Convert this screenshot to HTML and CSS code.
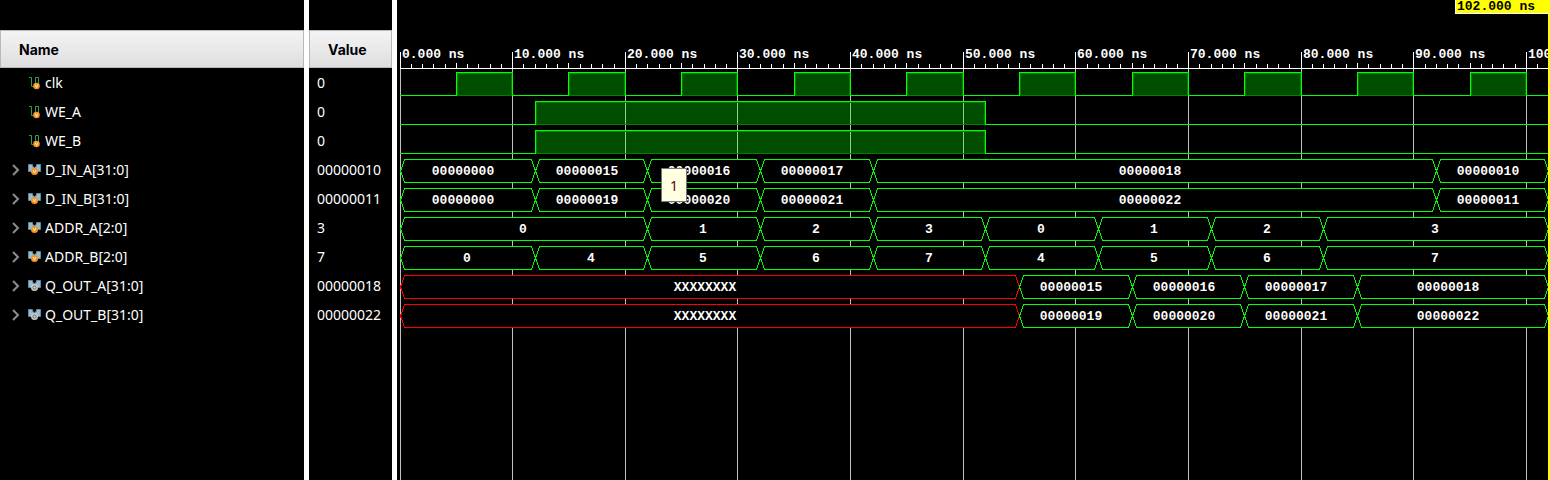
FILE: index.html
```html
<!DOCTYPE html>
<html lang="en">
<head>
<meta charset="utf-8">
<title>Waveform viewer</title>
<link rel="stylesheet" href="styles.css">
</head>
<body>
<svg class="defs" aria-hidden="true">
  <symbol id="bit" viewBox="0 0 14 14">
    <path d="M2 1.500H4.500V10.500H7M8.500 8V1.500H11.500V8" fill="none" stroke="#2f9e44"/>
    <circle cx="9.500" cy="10" r="3.300" fill="#f7941d"/>
    <path d="M8.200 8.500L9.500 11.500L10.800 8.500" fill="none" stroke="#ffe9cc"/>
  </symbol>
  <symbol id="bus-shape" viewBox="0 0 14 14">
    <path d="M1.500 1.500H5.500V3L7.500 5L9.500 3V1.500H13.500V8.500H1.500Z" fill="#93bdd4" stroke="#66889b"/>
  </symbol>
  <symbol id="bus-in" viewBox="0 0 14 14">
    <use href="#bus-shape"/>
    <circle cx="7.500" cy="8.500" r="3.500" fill="#f7941d"/>
    <path d="M6.200 7L7.500 10L8.800 7" fill="none" stroke="#ffe9cc"/>
  </symbol>
  <symbol id="bus-out" viewBox="0 0 14 14">
    <use href="#bus-shape"/>
    <circle cx="7.500" cy="8.500" r="3.500" fill="#c8c8c8"/>
    <circle cx="7.500" cy="8.500" r="1.500" fill="#ddd" stroke="#666"/>
  </symbol>
</svg>
<main class="viewer">
  <section class="names">
    <h2 class="head">Name</h2>
    <ul class="list" id="names"></ul>
  </section>
  <section class="values">
    <h2 class="head">Value</h2>
    <ul class="list" id="values"></ul>
  </section>
  <section class="wave" id="wave">
    <svg class="plot" id="plot" role="img" aria-label="Signal waveforms"></svg>
    <div class="cursor"></div>
    <div class="time">102.000 ns</div>
    <div class="tip" role="tooltip">1</div>
  </section>
</main>
<script src="wave.js"></script>
</body>
</html>
```
FILE: styles.css
```css
* { box-sizing: border-box; }
body {
  margin: 0;
  background: #000;
  color: #fff;
  font: 14px/29px "Noto Sans", sans-serif;
}
.defs { position: absolute; width: 0; height: 0; }
.viewer {
  display: grid;
  grid-template-columns: 309px 88px minmax(0, 1fr);
  min-height: 100vh;
}
.names, .values { padding-top: 30px; border-right: 5px solid #fff; }
.head {
  margin: 0;
  height: 38px;
  padding-left: 18px;
  border: 1px solid #b8b8b8;
  background: linear-gradient(#f4f4f4, #dedee0);
  color: #000008;
  font: bold 14px/38px Inter, sans-serif;
}
.list { list-style: none; margin: 0; padding: 0; }
.row { display: flex; align-items: center; height: 29px; padding-left: 11px; }
.values .row { padding-left: 8px; }
.toggle {
  display: flex;
  width: 10px;
  padding: 0;
  border: 0;
  background: none;
}
.slot { width: 16px; }
.chevron { width: 10px; height: 12px; fill: none; stroke: #8c8c8c; stroke-width: 2; }
.icon { width: 14px; height: 14px; margin-right: 4px; }
.wave { position: relative; overflow: hidden; }
.plot { position: absolute; inset: 0; width: 100%; height: 100%; shape-rendering: crispEdges; }
.label { fill: #fff; font: bold 13px "Liberation Mono", monospace; white-space: pre; }
.middle { text-anchor: middle; }
.axis { stroke: #fff; }
.grid { stroke: #c0c0c0; }
.high { fill: #00ff00; fill-opacity: 0.3; }
.inner { fill: none; stroke: #008000; }
.line { fill: none; stroke: #00ff00; }
.bus { fill: none; stroke: #00ff00; }
.unknown { stroke: #ff0000; }
.mask { fill: #000; }
.cursor { position: absolute; top: 0; bottom: 0; right: 0; width: 2px; background: #ff0; }
.time {
  position: absolute;
  top: 0;
  right: 0;
  width: 95px;
  padding-left: 1px;
  border: solid #fff;
  border-width: 0 0 1px 1px;
  background: #ff0;
  color: #000;
  font: bold 13px/13px "Liberation Mono", monospace;
}
.tip {
  position: absolute;
  top: 168px;
  left: 264px;
  width: 26px;
  height: 34px;
  border: 1px solid #767676;
  background: #ffffe1;
  color: #600010;
  text-align: center;
  line-height: 34px;
}
```
FILE: wave.js
```js
const END = 102;
const clock = [];
for (let t = 5; t < 100; t += 10) clock.push([t, t + 5]);

const signals = [
  { name: "clk", value: "0", high: clock },
  { name: "WE_A", value: "0", high: [[12, 52]] },
  { name: "WE_B", value: "0", high: [[12, 52]] },
  { name: "D_IN_A[31:0]", value: "00000010", bus: [[0, "00000000"], [12, "00000015"], [22, "00000016"], [32, "00000017"], [42, "00000018"], [92, "00000010"]] },
  { name: "D_IN_B[31:0]", value: "00000011", bus: [[0, "00000000"], [12, "00000019"], [22, "00000020"], [32, "00000021"], [42, "00000022"], [92, "00000011"]] },
  { name: "ADDR_A[2:0]", value: "3", bus: [[0, "0"], [22, "1"], [32, "2"], [42, "3"], [52, "0"], [62, "1"], [72, "2"], [82, "3"]] },
  { name: "ADDR_B[2:0]", value: "7", bus: [[0, "0"], [12, "4"], [22, "5"], [32, "6"], [42, "7"], [52, "4"], [62, "5"], [72, "6"], [82, "7"]] },
  { name: "Q_OUT_A[31:0]", value: "00000018", out: true, bus: [[0, "XXXXXXXX"], [55, "00000015"], [65, "00000016"], [75, "00000017"], [85, "00000018"]] },
  { name: "Q_OUT_B[31:0]", value: "00000022", out: true, bus: [[0, "XXXXXXXX"], [55, "00000019"], [65, "00000020"], [75, "00000021"], [85, "00000022"]] }
];

const icon = s => s.bus ? (s.out ? "bus-out" : "bus-in") : "bit";
document.getElementById("names").innerHTML = signals.map(s =>
  `<li class="row"><span class="slot">${s.bus ? `<button class="toggle" aria-label="Expand ${s.name}"><svg class="chevron" viewBox="0 0 10 12"><path d="M2 1L7 6L2 11"/></svg></button>` : ""}</span>` +
  `<svg class="icon"><use href="#${icon(s)}"/></svg><span>${s.name}</span></li>`).join("");
document.getElementById("values").innerHTML = signals.map(s => `<li class="row">${s.value}</li>`).join("");

function draw() {
  const box = document.getElementById("wave");
  const w = box.clientWidth, h = box.clientHeight;
  const scale = (w - 4) / END;
  const x = t => Math.floor(3 + t * scale) + 0.5;
  const end = w - 1.5;
  let out = "";
  for (let t = 0; t <= END; t++) {
    if (t % 10 === 0) {
      out += `<path class="grid" d="M${x(t)} 69V${h}"/><path class="axis" d="M${x(t)} 52V69"/>`;
      out += `<text class="label" x="${x(t) + 1.5}" y="58">${t}.000 ns</text>`;
    } else {
      out += `<path class="axis" d="M${x(t)} ${t % 5 ? 64 : 63}V69"/>`;
    }
  }
  out += `<path class="axis" d="M3 68.5H${end}"/>`;
  signals.forEach((s, i) => {
    const top = 72.5 + i * 29, base = top + 23, mid = top + 11.5;
    if (s.high) {
      let d = `M3 ${base}`;
      for (const [a, b] of s.high) {
        const l = x(a), r = x(b);
        out += `<rect class="high" x="${l}" y="${top}" width="${r - l}" height="23"/>`;
        out += `<path class="inner" d="M${l + 1} ${base}V${top + 1}H${r - 1}V${base}Z"/>`;
        out += `<path class="line" d="${d}H${l}V${top}H${r}V${base}"/>`;
        d = `M${r} ${base}`;
      }
      out += `<path class="line" d="${d}H${end}"/>`;
      return;
    }
    out += `<rect class="mask" x="4" y="${top}" width="${end - 4}" height="23"/>`;
    s.bus.forEach(([t, text], k) => {
      const l = x(t), r = k + 1 < s.bus.length ? x(s.bus[k + 1][0]) : end;
      const unknown = text[0] === "X" ? " unknown" : "";
      out += `<path class="bus${unknown}" d="M${l} ${mid}L${l + 4} ${top}H${r - 4}L${r} ${mid}L${r - 4} ${base}H${l + 4}Z"/>`;
      const shift = text.length > 1 ? 5 : 1;
      out += `<text class="label middle" x="${Math.round((l + r) / 2) - shift}" y="${top + 15.5}">${text}</text>`;
    });
  });
  document.getElementById("plot").innerHTML = out;
}
draw();
addEventListener("resize", draw);
```
